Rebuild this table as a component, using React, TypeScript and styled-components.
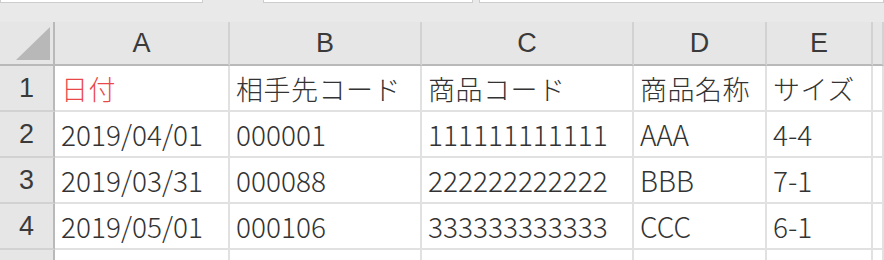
import React from "react";
import styled, { createGlobalStyle } from "styled-components";

const GlobalStyle = createGlobalStyle`
  html, body {
    margin: 0;
    padding: 0;
    background: #ffffff;
    overflow: hidden;
  }
  * {
    box-sizing: border-box;
  }
`;

const columns = [
  { label: "A", width: 175 },
  { label: "B", width: 192 },
  { label: "C", width: 212 },
  { label: "D", width: 133 },
  { label: "E", width: 106 },
  { label: "", width: 0 },
];

const rows: { values: string[]; red?: number; latin?: boolean }[] = [
  { values: ["日付", "相手先コード", "商品コード", "商品名称", "サイズ", ""], red: 0 },
  { values: ["2019/04/01", "000001", "111111111111", "AAA", "4-4", ""], latin: true },
  { values: ["2019/03/31", "000088", "222222222222", "BBB", "7-1", ""], latin: true },
  { values: ["2019/05/01", "000106", "333333333333", "CCC", "6-1", ""], latin: true },
  { values: ["", "", "", "", "", ""] },
];

const Page = styled.div`
  width: 884px;
  height: 260px;
  overflow: hidden;
  font-family: "Noto Sans CJK JP", "Liberation Sans", sans-serif;
  color: #333333;
`;

const FormulaStrip = styled.div`
  display: flex;
  height: 22px;
  background: #e9e9e9;
`;

const StripBox = styled.div<{ $width?: number; $gap?: number }>`
  height: 3px;
  width: ${(p) => (p.$width ? `${p.$width}px` : "auto")};
  flex: ${(p) => (p.$width ? "none" : "1")};
  margin-left: ${(p) => p.$gap ?? 0}px;
  background: #ffffff;
  border: 1px solid #cdcdcd;
  border-top: none;
`;

const Sheet = styled.div`
  display: grid;
  grid-template-columns: 55px ${columns
      .filter((c) => c.width)
      .map((c) => `${c.width}px`)
      .join(" ")} 1fr;
  grid-template-rows: 44px;
  grid-auto-rows: 46px;
`;

const Corner = styled.div`
  background: #e6e6e6;
  border-right: 2px solid #b9b9b9;
  border-bottom: 2px solid #b9b9b9;
  display: flex;
  align-items: flex-end;
  justify-content: flex-end;
  padding: 0 3px 4px 0;
`;

const ColHeader = styled.div`
  background: #e6e6e6;
  border-right: 2px solid #d2d2d2;
  border-bottom: 2px solid #b9b9b9;
  display: flex;
  align-items: center;
  justify-content: center;
  font-family: "Liberation Sans", sans-serif;
  font-size: 27px;
  color: #3a3a3a;
`;

const RowHeader = styled.div`
  background: #e6e6e6;
  border-right: 2px solid #b9b9b9;
  border-bottom: 2px solid #d2d2d2;
  display: flex;
  align-items: center;
  justify-content: center;
  font-family: "Liberation Sans", sans-serif;
  font-size: 27px;
  color: #3a3a3a;
`;

const Cell = styled.div<{ $red?: boolean; $latin?: boolean }>`
  background: #ffffff;
  border-right: 2px solid #e1e1e1;
  border-bottom: 2px solid #e1e1e1;
  display: flex;
  align-items: center;
  padding-left: 6px;
  font-size: ${(p) => (p.$latin ? 28 : 27)}px;
  font-weight: 300;
  letter-spacing: ${(p) => (p.$latin ? 0 : 0.5)}px;
  white-space: nowrap;
  overflow: hidden;
  color: ${(p) => (p.$red ? "#ea4848" : "#333333")};
`;

const CornerMark = () => (
  <svg width="34" height="33" viewBox="0 0 34 33">
    <polygon points="0,33 34,33 34,0" fill="#b8b8b8" />
  </svg>
);

export default function App() {
  return (
    <Page>
      <GlobalStyle />
      <FormulaStrip>
        <StripBox $width={203} />
        <StripBox $width={210} $gap={60} />
        <StripBox $gap={6} />
      </FormulaStrip>
      <Sheet>
        <Corner>
          <CornerMark />
        </Corner>
        {columns.map((c, i) => (
          <ColHeader key={i}>{c.label}</ColHeader>
        ))}
        {rows.map((row, r) => (
          <React.Fragment key={r}>
            <RowHeader>{r < 4 ? r + 1 : ""}</RowHeader>
            {row.values.map((v, i) => (
              <Cell key={i} $red={row.red === i} $latin={row.latin}>
                {v}
              </Cell>
            ))}
          </React.Fragment>
        ))}
      </Sheet>
    </Page>
  );
}
